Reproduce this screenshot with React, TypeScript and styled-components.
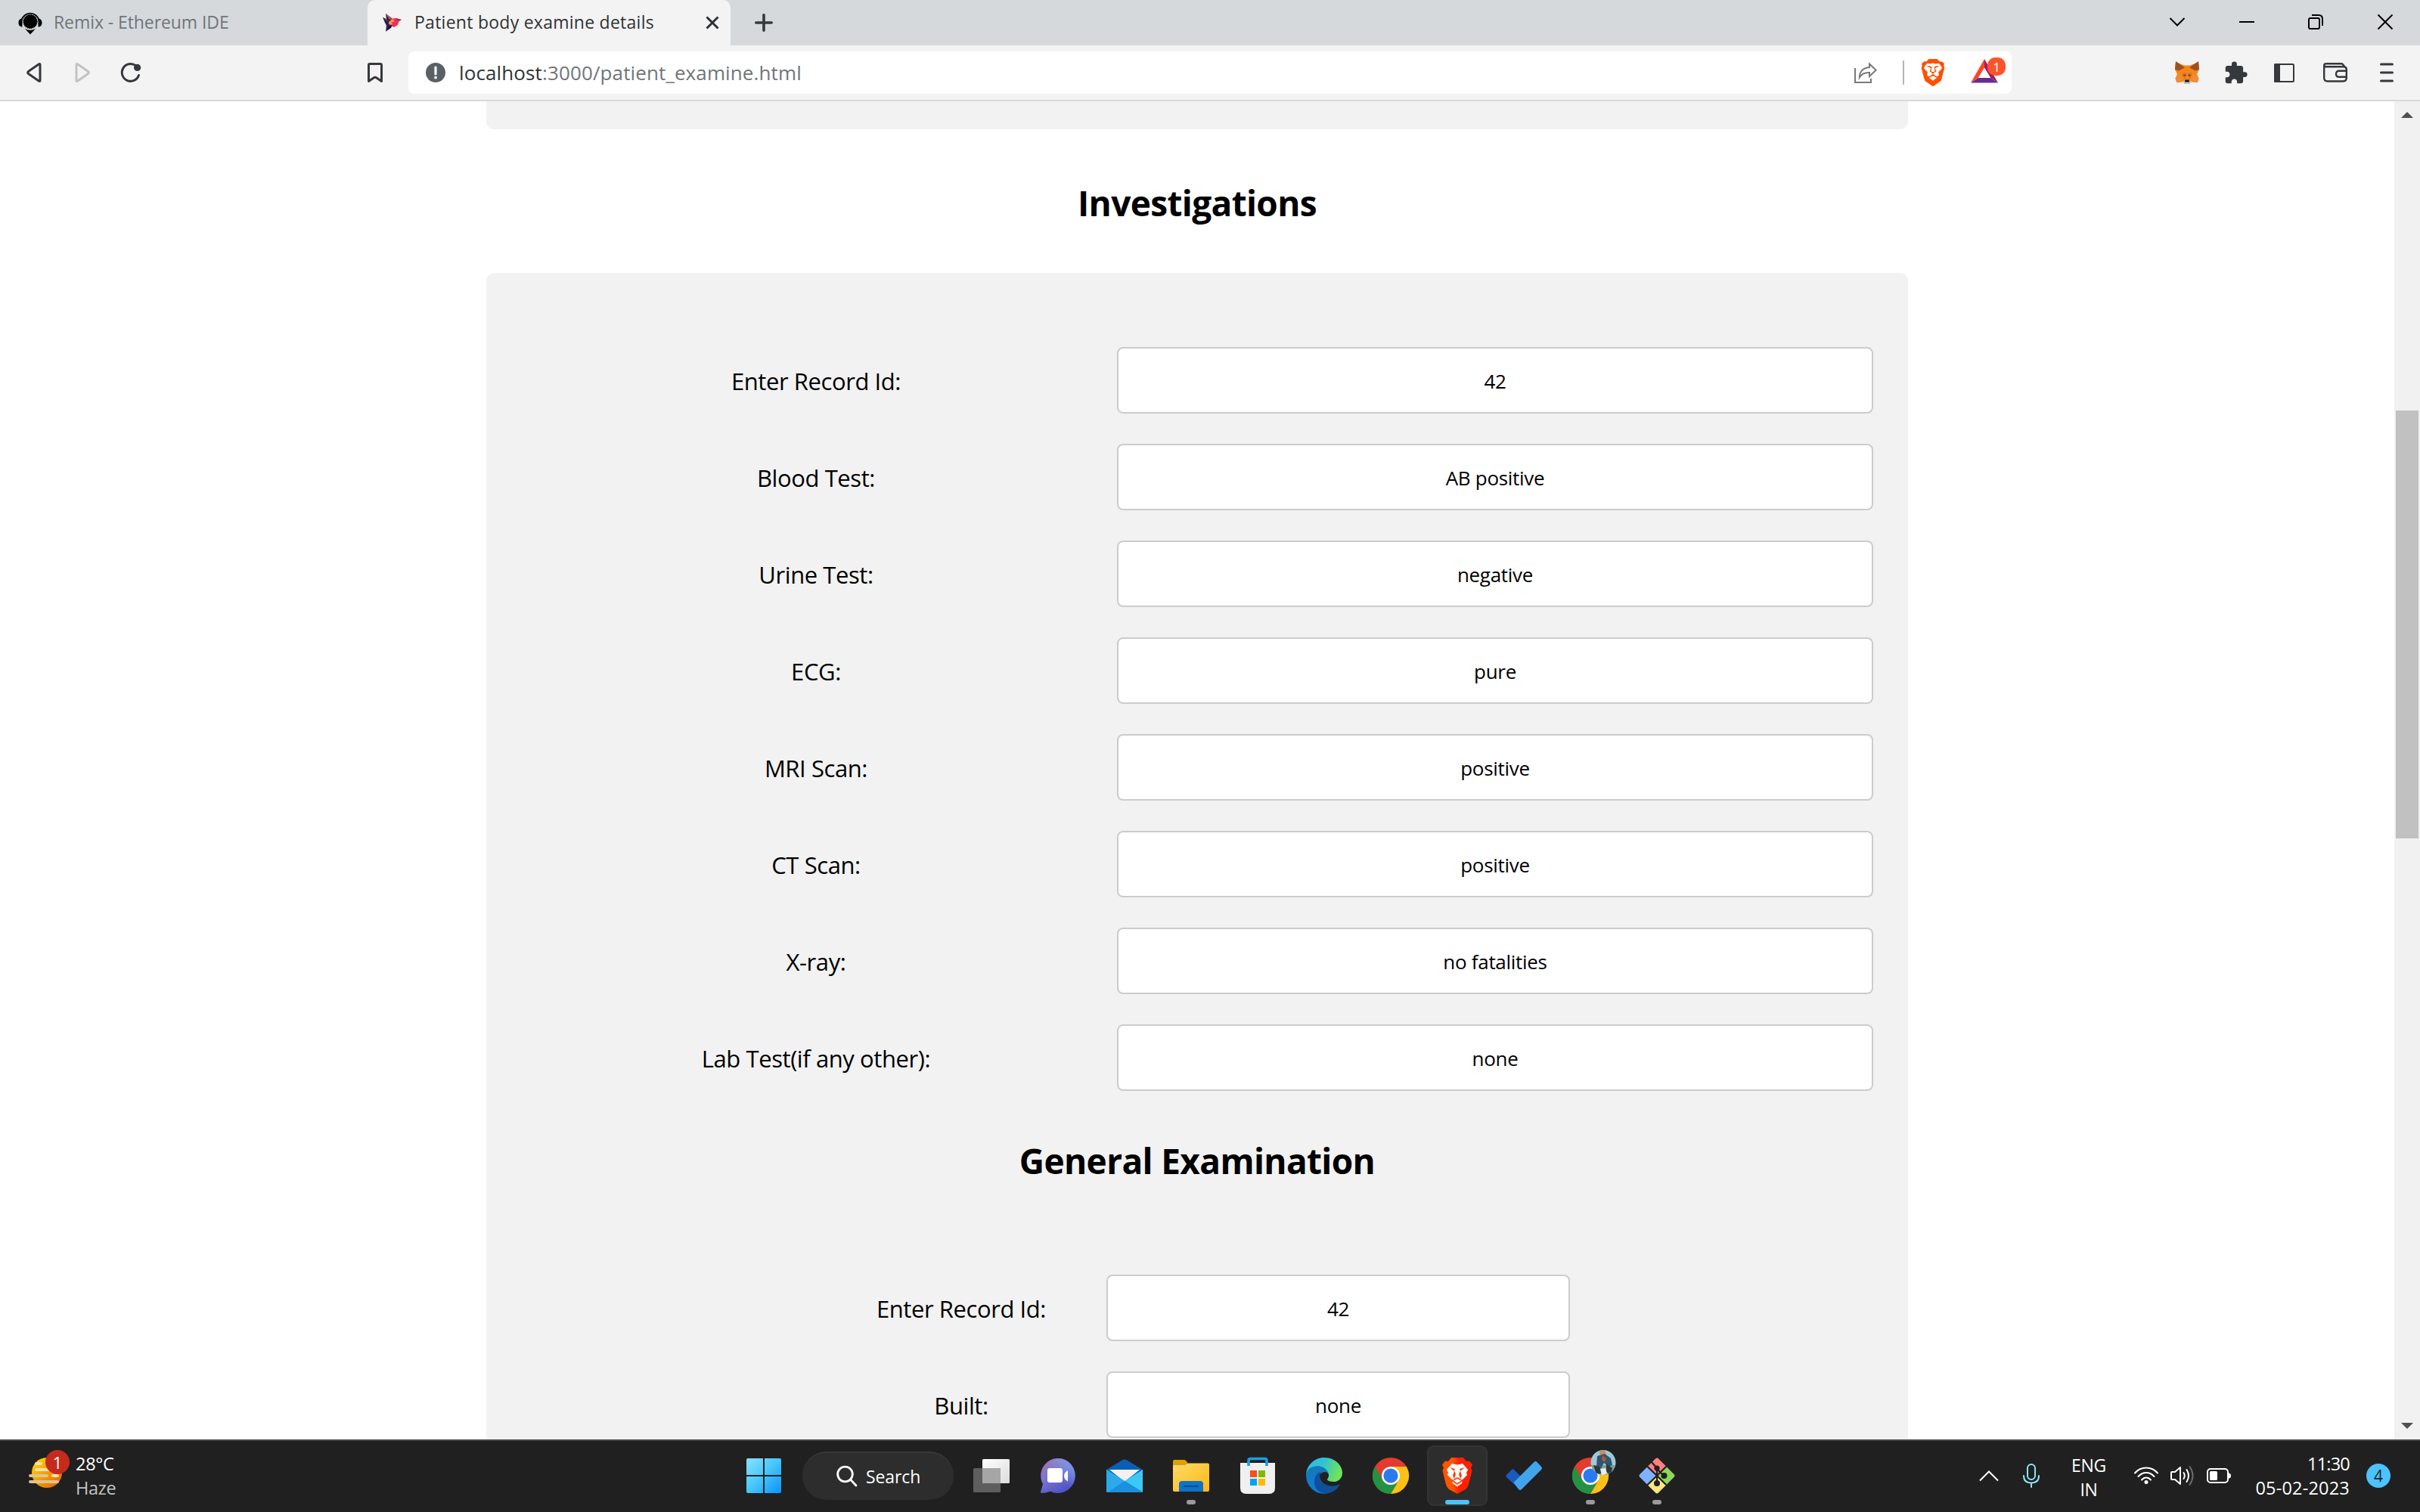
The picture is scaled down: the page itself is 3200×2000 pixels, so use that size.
import React from "react";
import styled, { createGlobalStyle } from "styled-components";
import { SiBrave } from "react-icons/si";
import { MdExtension } from "react-icons/md";

const GlobalStyle = createGlobalStyle`
  * { box-sizing: border-box; }
  body { margin: 0; background: #fff; overflow: hidden; }
  svg { display: block; flex: none; overflow: visible; }
`;

const Screen = styled.div`
  display: flex;
  flex-direction: column;
  width: 3200px;
  height: 2000px;
  font-family: "Open Sans", "Noto Sans", sans-serif;
  overflow: hidden;
`;

/* ---------- Browser chrome ---------- */

const TabStrip = styled.div`
  display: flex;
  height: 60px;
  flex: none;
  background: #d5d9dc;
`;

const Tab = styled.div<{ $active?: boolean }>`
  display: flex;
  align-items: center;
  width: ${(p) => (p.$active ? 480 : 486)}px;
  padding: 0 15px 0 ${(p) => (p.$active ? 20 : 24)}px;
  border-radius: 10px 10px 0 0;
  background: ${(p) => (p.$active ? "#f3f3f3" : "transparent")};
`;

const TabTitle = styled.span<{ $active?: boolean }>`
  flex: 1;
  margin-left: ${(p) => (p.$active ? 17 : 15)}px;
  padding-bottom: 2px;
  font-size: 23px;
  line-height: 32px;
  letter-spacing: ${(p) => (p.$active ? 0.26 : -0.08)}px;
  color: ${(p) => (p.$active ? "#2f3234" : "#70757a")};
  white-space: nowrap;
`;

const IconCell = styled.button<{ $w: number }>`
  display: flex;
  align-items: center;
  justify-content: center;
  width: ${(p) => p.$w}px;
  height: 100%;
  flex: none;
  padding: 0;
  border: 0;
  background: transparent;
  color: #35393d;
`;

const WindowControls = styled.div`
  display: flex;
  width: 367px;
  margin-left: auto;
  padding-bottom: 2px;
`;

const Toolbar = styled.div`
  display: flex;
  align-items: center;
  height: 74px;
  flex: none;
  padding-left: 13px;
  background: #f3f3f3;
  border-bottom: 2px solid #d5d9dc;
`;

const BookmarkCell = styled(IconCell)`
  margin-left: 275px;
  margin-right: 28px;
`;

const AddressBar = styled.div`
  display: flex;
  align-items: center;
  width: 2120px;
  height: 56px;
  padding: 0 8px 0 23px;
  border-radius: 8px;
  background: #fff;
`;

const Url = styled.span`
  flex: 1;
  margin-left: 18px;
  font-size: 26px;
  line-height: 36px;
  letter-spacing: 0.12px;
  color: #70757a;
`;

const UrlHost = styled.span`
  color: #303437;
`;

const BarDivider = styled.span`
  width: 2px;
  height: 32px;
  margin: 0 20px 0 34px;
  background: #b3b6b9;
`;

const RewardsButton = styled.div`
  position: relative;
  width: 46px;
  height: 36px;
  margin-left: 32px;
`;

const RewardsBadge = styled.span`
  position: absolute;
  left: 22px;
  top: -2px;
  width: 24px;
  height: 24px;
  border-radius: 10px;
  background: #fb542b;
  color: #fff;
  font-size: 17px;
  line-height: 25px;
  text-align: center;
`;

const Extensions = styled.div`
  display: flex;
  height: 100%;
  margin-left: auto;
  padding-right: 12px;
`;

/* ---------- Page ---------- */

const Viewport = styled.div`
  display: flex;
  height: 1770px;
  flex: none;
  background: #fff;
  overflow: hidden;
`;

const Page = styled.main`
  display: flex;
  flex: 1;
  flex-direction: column;
  align-items: center;
  color: #000;
`;

const CardEnd = styled.div`
  width: 1880px;
  height: 37px;
  flex: none;
  border-radius: 0 0 10px 10px;
  background: #f2f2f2;
`;

const Heading = styled.h2<{ $h: number; $shift: number }>`
  flex: none;
  height: ${(p) => p.$h}px;
  margin: 0;
  padding-top: ${(p) => p.$shift}px;
  font-size: 46px;
  line-height: ${(p) => p.$h - p.$shift}px;
  letter-spacing: -0.65px;
  font-weight: 700;
  text-align: center;
`;

const Card = styled.section`
  width: 1880px;
  height: 1600px;
  flex: none;
  padding-top: 98px;
  border-radius: 10px 10px 0 0;
  background: #f2f2f2;
`;

const Fields = styled.div<{ $label: number; $input: number; $left: number; $top?: number }>`
  display: grid;
  grid-template-columns: ${(p) => p.$label}px ${(p) => p.$input}px;
  grid-auto-rows: 88px;
  row-gap: 40px;
  margin: ${(p) => p.$top ?? 0}px 0 0 ${(p) => p.$left}px;
`;

const Label = styled.label`
  font-size: 31px;
  line-height: 91px;
  letter-spacing: -0.42px;
  text-align: center;
`;

const Input = styled.input`
  width: 100%;
  height: 88px;
  padding: 2px 0 0;
  border: 2px solid #ccc;
  border-radius: 8px;
  background: #fff;
  font: 26px "Open Sans", "Noto Sans", sans-serif;
  letter-spacing: -0.3px;
  text-align: center;
  color: #000;
`;

const Scrollbar = styled.div`
  display: flex;
  flex-direction: column;
  align-items: center;
  justify-content: space-between;
  width: 34px;
  padding: 14px 0;
  background: #f1f1f1;
`;

const Thumb = styled.div`
  width: 30px;
  height: 566px;
  margin: 387px 0 auto;
  background: #c1c1c1;
`;

/* ---------- Taskbar ---------- */

const Taskbar = styled.footer`
  display: flex;
  align-items: center;
  height: 96px;
  flex: none;
  border-top: 2px solid #454545;
  background: #202020;
  color: #fff;
`;

const Weather = styled.div`
  display: flex;
  align-items: center;
  width: 966px;
  padding: 0 0 2px 36px;
`;

const WeatherIcon = styled.div`
  position: relative;
  width: 64px;
  height: 60px;
`;

const WeatherBadge = styled.span`
  position: absolute;
  left: 24px;
  top: -4px;
  width: 32px;
  height: 32px;
  border-radius: 50%;
  background: #c42b1c;
  font-size: 22px;
  line-height: 32px;
  text-align: center;
`;

const Lines = styled.div<{ $align?: string; $spacing?: number }>`
  display: flex;
  flex-direction: column;
  font-size: 23.5px;
  line-height: 32px;
  letter-spacing: ${(p) => p.$spacing ?? -0.3}px;
  text-align: ${(p) => p.$align ?? "left"};
`;

const Muted = styled.span`
  color: #c4c4c4;
`;

const Apps = styled.div`
  display: flex;
  align-items: center;
  padding-bottom: 2px;
`;

const AppCell = styled.div`
  position: relative;
  display: flex;
  align-items: center;
  justify-content: center;
  width: 88px;
  height: 80px;
`;

const ActiveTile = styled.div`
  display: flex;
  align-items: center;
  justify-content: center;
  width: 80px;
  height: 80px;
  border: 2px solid #343434;
  border-radius: 9px;
  background: #2d2d2d;
`;

const RunMark = styled.span<{ $active?: boolean }>`
  position: absolute;
  left: ${(p) => (p.$active ? 28 : 38)}px;
  top: 72px;
  width: ${(p) => (p.$active ? 32 : 12)}px;
  height: 6px;
  border-radius: 3px;
  background: ${(p) => (p.$active ? "#4cc2ff" : "#9a9a9a")};
`;

const SearchPill = styled.div`
  display: flex;
  align-items: center;
  width: 200px;
  height: 64px;
  margin: 0 6px 0 7px;
  padding-left: 45px;
  border-radius: 32px;
  border-top: 2px solid #383838;
  background: #2d2d2d;
  font-size: 23px;
  letter-spacing: -0.1px;
  line-height: 32px;
`;

const SearchText = styled.span`
  margin-left: 11px;
`;

const Tray = styled.div`
  display: flex;
  align-items: center;
  height: 100%;
  margin-left: auto;
  padding: 0 39px 2px 0;
`;

const Language = styled(Lines)`
  width: 60px;
  margin: 3px 30px 0 19px;
  font-size: 23px;
`;

const StatusIcons = styled.div`
  display: flex;
  align-items: center;
  gap: 16px;
`;

const Clock = styled(Lines)`
  width: 157px;
`;

const Time = styled.span`
  letter-spacing: -0.8px;
`;

const DateText = styled.span`
  letter-spacing: 0.2px;
`;

const Notifications = styled.span`
  width: 32px;
  height: 32px;
  margin-left: 22px;
  border-radius: 50%;
  background: #4cc2ff;
  color: #10222c;
  font-size: 21px;
  line-height: 32px;
  text-align: center;
`;

/* ---------- Drawings ---------- */

const RemixIcon = () => (
  <svg width="32" height="30" viewBox="0 0 32 30">
    <circle cx="16" cy="13.5" r="9" fill="#000" stroke="#000" strokeWidth="1.4" strokeDasharray="1.4 1" />
    <path d="M4.6 12a11.6 11.6 0 0 1 22.8 0" fill="none" stroke="#000" strokeWidth="1.8" />
    <path d="M5.5 9.5v11C2 20.500 .5 18 .5 15s1.500-5.500 5-5.500zM26.500 9.500v11c3.500 0 5-2.500 5-5.500s-1.500-5.500-5-5.500z" />
    <path d="M9 23q7 4 14 0l-7 7.500z" />
  </svg>
);

const BirdIcon = () => (
  <svg width="25" height="26" viewBox="0 0 25 26">
    <path d="M0 6l5 2-1-7 8 6 4 6-6 6-6 6 1-8-2-4z" fill="#2b2350" />
    <path d="M4 1l8 6-3 2zM0 6l6 3 1 2z" fill="#c4573d" />
    <path d="M10 8l7-1 8 2-4 3-1 4-5 3-6-3 3-3z" fill="#ee2f55" />
    <path d="M8 12l5-4 3 3-4 2 1 3-5-1z" fill="#ff8a66" />
    <path d="M17 7l8 2-5 1z" fill="#8c2b3d" />
    <path d="M9 17l4-1-2 4-6 4z" fill="#171539" />
  </svg>
);

const CloseSmall = () => (
  <svg width="18" height="18" viewBox="0 0 18 18" stroke="#2f3234" strokeWidth="3">
    <path d="M1.500 1.500l15 15M16.500 1.500l-15 15" />
  </svg>
);

const PlusIcon = () => (
  <svg width="24" height="24" viewBox="0 0 24 24" stroke="#35393d" strokeWidth="3.600" strokeLinecap="round">
    <path d="M12 1.800v20.400M1.800 12h20.400" />
  </svg>
);

const TriangleIcon = ({ forward }: { forward?: boolean }) => (
  <svg width="20" height="26" viewBox="0 0 20 26" fill="none" stroke={forward ? "#c0c2c4" : "#35393d"} strokeWidth="3" strokeLinejoin="round">
    <path d={forward ? "M2 2.500Q2 1 3.500 1.800L17.500 11.500Q19 13 17.500 14.500L3.500 24.200Q2 25 2 23.500z" : "M18 2.500Q18 1 16.500 1.800L2.500 11.500Q1 13 2.500 14.500L16.500 24.200Q18 25 18 23.500z"} />
  </svg>
);

const ReloadIcon = () => (
  <svg width="28" height="26" viewBox="0 0 28 26">
    <path d="M20.500 3.800A11.400 11.400 0 1 0 24.500 16.500" fill="none" stroke="#35393d" strokeWidth="3" strokeLinecap="round" />
    <circle cx="22.600" cy="6.400" r="4.600" fill="#35393d" />
  </svg>
);

const BookmarkIcon = () => (
  <svg width="20" height="26" viewBox="0 0 20 26" fill="none" stroke="#35393d" strokeWidth="3" strokeLinejoin="round">
    <path d="M1.500 3q0-1.500 1.500-1.500h14q1.500 0 1.500 1.500v21.500L12 20q-2-1.300-4 0l-6.500 4.500z" />
  </svg>
);

const InfoIcon = () => (
  <svg width="26" height="26" viewBox="0 0 26 26">
    <circle cx="13" cy="13" r="13" fill="#5b6064" />
    <path d="M13 6v9" stroke="#fff" strokeWidth="3.200" strokeLinecap="round" />
    <circle cx="13" cy="19.600" r="1.900" fill="#fff" />
  </svg>
);

const ShareIcon = () => (
  <svg width="30" height="28" viewBox="0 0 30 28" fill="none" stroke="#77797b" strokeWidth="2">
    <path d="M1 8v19h21v-5" />
    <path d="M20 2.500l8.600 8.300-8.600 8.200v-5Q11 13.500 6.800 20.500 7 8.500 20 7z" />
  </svg>
);

const BatIcon = () => (
  <svg width="36" height="32" viewBox="0 0 36 32">
    <path d="M18 0v12l-8 13-10 6.500z" fill="#ff4724" />
    <path d="M18 0l18 31.500-10-6.500-8-13z" fill="#9e1f63" />
    <path d="M0 31.500l10-6.500h16l10 6.500z" fill="#662d91" />
    <path d="M18 11.500l8 13.500H10z" fill="#fff" />
  </svg>
);

const FoxIcon = () => (
  <svg width="32" height="30" viewBox="0 0 32 30">
    <path d="M1 1l11 4.500h8L31 1l1 10-3 6 2.500 6-2 5-8-1-2.500 3h-6L10.500 27l-8 1-2-5L3 17l-3-6z" fill="#f6851b" />
    <path d="M1 0l12 8.500-8 4L0 11zM31 0L19 8.500l8 4 5-1.500z" fill="#9a5125" />
    <path d="M3 17l5 1 3 9-8.500 1.500-2-5.500zM29 17l-5 1-3 9 8.500 1.500 2-5.500z" fill="#f08c35" />
    <path d="M9 16l6-1-2 9zM23 16l-6-1 2 9z" fill="#df6f1d" />
    <path d="M10 19l4.500.500v-2zM22 19l-4.500.500v-2z" fill="#2e3548" />
    <path d="M10 27l3-2h6l3 2-3 3h-6z" fill="#cdbdb1" />
    <path d="M13.500 24.500h5l.7 3h-6.400z" fill="#17181d" />
  </svg>
);

const SidebarIcon = () => (
  <svg width="27" height="25" viewBox="0 0 27 25">
    <rect x="1" y="1" width="25" height="23" rx="1.500" fill="none" stroke="#35393d" strokeWidth="2" />
    <rect x="0" y="0" width="8" height="25" rx="1.500" fill="#35393d" />
  </svg>
);

const WalletIcon = () => (
  <svg width="32" height="26" viewBox="0 0 32 26" fill="none" stroke="#35393d" strokeWidth="2.400">
    <path d="M1.200 4v16q0 4.500 4.500 4.500h20.600q4.500 0 4.500-4.500V9q0-3.800-4-3.800H4q-2.800 0-2.800-2T4 1.200h20q2 0 4.500 4.500" />
    <path d="M30.800 10.800H21q-4 0-4 4t4 4h9.800" />
  </svg>
);

const MenuIcon = () => (
  <svg width="18" height="26" viewBox="0 0 18 26" stroke="#35393d" strokeWidth="3" strokeLinecap="round">
    <path d="M1.500 2h15M1.500 13h15M1.500 24h15" />
  </svg>
);

const WindowGlyph = ({ d }: { d: string }) => (
  <svg width="20" height="20" viewBox="0 0 20 20" fill="none" stroke="#000" strokeWidth="2">
    <path d={d} />
  </svg>
);

const ArrowGlyph = ({ down }: { down?: boolean }) => (
  <svg width="16" height="8" viewBox="0 0 16 8" fill="#505050">
    <path d={down ? "M0 0h16L8 8z" : "M0 8h16L8 0z"} />
  </svg>
);

const HazeIcon = () => (
  <svg width="64" height="60" viewBox="0 0 64 60">
    <defs>
      <linearGradient id="sun" x1="0" y1="0" x2="1" y2="1">
        <stop offset="0.100" stopColor="#ffd400" />
        <stop offset="1" stopColor="#e8590a" />
      </linearGradient>
    </defs>
    <circle cx="26" cy="26" r="20" fill="url(#sun)" />
    <g stroke="#f3dfae" strokeWidth="4" strokeLinecap="round">
      <path d="M12 14h6M12 22h18M34 30h6" />
      <path d="M4 30h22M4 38h36" stroke="#dec58f" />
    </g>
  </svg>
);

const StartIcon = () => (
  <svg width="46" height="46" viewBox="0 0 46 46">
    <defs>
      <linearGradient id="start" x1="0" y1="0" x2="46" y2="46" gradientUnits="userSpaceOnUse">
        <stop offset="0" stopColor="#8be0fd" />
        <stop offset="0.450" stopColor="#4cc9fb" />
        <stop offset="1" stopColor="#0a93fa" />
      </linearGradient>
    </defs>
    <path d="M2 0h20v22H0V2q0-2 2-2zM24 0h20q2 0 2 2v20H24zM0 24h22v22H2q-2 0-2-2zM24 24h22v20q0 2-2 2H24z" fill="url(#start)" />
  </svg>
);

const SearchIcon = () => (
  <svg width="28" height="28" viewBox="0 0 28 28" fill="none" stroke="#fff" strokeWidth="2.800" strokeLinecap="round">
    <circle cx="11.500" cy="11" r="9.800" />
    <path d="M18.500 18l7.500 8" />
  </svg>
);

const TaskViewIcon = () => (
  <svg width="48" height="44" viewBox="0 0 48 44">
    <defs>
      <linearGradient id="tv" x1="0" y1="0" x2="1" y2="1">
        <stop offset="0" stopColor="#fff" />
        <stop offset="1" stopColor="#dcdcdc" />
      </linearGradient>
    </defs>
    <rect x="12" y="0" width="36" height="32" rx="1.500" fill="url(#tv)" />
    <rect x="0" y="12" width="36" height="32" rx="1.500" fill="#6a6a6a" fillOpacity="0.850" />
    <path d="M12 12h24v20H12z" fill="#a6a6a6" />
  </svg>
);

const ChatIcon = () => (
  <svg width="46" height="46" viewBox="0 0 46 46">
    <defs>
      <linearGradient id="chat" x1="0.100" y1="0" x2="0.600" y2="1">
        <stop offset="0" stopColor="#a275a8" />
        <stop offset="0.450" stopColor="#7b77d4" />
        <stop offset="1" stopColor="#4f52c6" />
      </linearGradient>
      <linearGradient id="chatEdge" x1="0" y1="1" x2="1" y2="0">
        <stop offset="0.500" stopColor="#7ba7f0" stopOpacity="0" />
        <stop offset="1" stopColor="#7ba7f0" stopOpacity="0.900" />
      </linearGradient>
    </defs>
    <path d="M23 0a23 23 0 1 1-10 43.800Q7 46 1.500 46-.5 46 .3 43.500L3 34A23 23 0 0 1 23 0z" fill="url(#chat)" />
    <path d="M23 0a23 23 0 1 1-10 43.800Q7 46 1.500 46-.5 46 .3 43.500L3 34A23 23 0 0 1 23 0z" fill="url(#chatEdge)" />
    <rect x="9" y="13" width="20" height="19" rx="3" fill="#fff" />
    <path d="M36 16v14.500q-5-3-5-7.200t5-7.300z" fill="#fff" />
  </svg>
);

const MailIcon = () => (
  <svg width="48" height="44" viewBox="0 0 48 44">
    <path d="M0 14L22 .8q2-1.200 4 0L48 14v10H0z" fill="#0a5fb4" />
    <path d="M4 14h40L24 30z" fill="#f2f0f2" />
    <path d="M48 14L24 29l24 15z" fill="#3cc8f5" />
    <path d="M0 14v28q0 2 2 2h46z" fill="#2aaaea" />
    <path d="M0 44l24-15 24 15z" fill="#1b8fe0" />
    <path d="M0 14v28q0 2 2 2l22-15z" fill="#2aaaea" />
  </svg>
);

const FolderIcon = () => (
  <svg width="48" height="42" viewBox="0 0 48 42">
    <defs>
      <linearGradient id="folder" x1="0" y1="0" x2="1" y2="1">
        <stop offset="0" stopColor="#ffda69" />
        <stop offset="1" stopColor="#fdb913" />
      </linearGradient>
    </defs>
    <path d="M0 2q0-2 2-2h13q2 0 3.500 2.500L20 6v6H0z" fill="#dfa000" />
    <path d="M0 7h16l4-2.500h26q2 0 2 2V40q0 2-2 2H2q-2 0-2-2z" fill="url(#folder)" />
    <path d="M8 42V32q0-4 4-4h24q4 0 4 4v10z" fill="#0f72c6" />
    <path d="M15 35h18" stroke="#0b4d8c" strokeWidth="2" strokeLinecap="round" />
  </svg>
);

const StoreIcon = () => (
  <svg width="46" height="48" viewBox="0 0 46 48">
    <path d="M0 7h46v33q0 8-8 8H8q-8 0-8-8z" fill="#f0f0f0" />
    <path d="M11 11V4q0-2.500 2.500-2.500h19Q35 1.500 35 4v7" fill="none" stroke="#1b9fe4" strokeWidth="3.600" />
    <path d="M13 17h9v9h-9z" fill="#f25022" />
    <path d="M24 17h9v9h-9z" fill="#7fba00" />
    <path d="M13 28h9v9h-9z" fill="#00a4ef" />
    <path d="M24 28h9v9h-9z" fill="#ffb900" />
  </svg>
);

const EdgeIcon = () => (
  <svg width="48" height="48" viewBox="0 0 256 256">
    <defs>
      <linearGradient id="edgeA" x1="0" y1="0" x2="1" y2="0.300">
        <stop offset="0" stopColor="#35b5f1" />
        <stop offset="0.500" stopColor="#2fc3d2" />
        <stop offset="1" stopColor="#6fe35a" />
      </linearGradient>
      <linearGradient id="edgeB" x1="0.300" y1="0" x2="0.300" y2="1">
        <stop offset="0" stopColor="#1577b5" />
        <stop offset="1" stopColor="#0a80dc" />
      </linearGradient>
    </defs>
    <path d="M105.730 246.500a79.200 79.200 0 0 1-22.740-21.340 80.720 80.720 0 0 1 34.140-120.150c3.120-1.470 8.450-4.130 15.540-4a32.350 32.350 0 0 1 25.690 13 31.880 31.880 0 0 1 6.360 18.660c0-.210 24.460-79.600-80-79.600-43.900 0-84.720 36-84.720 72.430a130.150 130.150 0 0 0 12.110 56 128 128 0 0 0 156.380 67.110 75.550 75.550 0 0 1-62.760-8z" fill="url(#edgeB)" />
    <path d="M231 190.470a93.730 93.730 0 0 1-10.540 4.710 101.870 101.870 0 0 1-35.900 6.460c-47.320 0-88.540-32.550-88.540-74.320A31.480 31.480 0 0 1 112.450 100c-42.800 1.800-53.800 46.400-53.800 72.530 0 73.880 68.090 81.370 82.760 81.370 7.910 0 19.840-2.300 27-4.560l1.310-.440a128.340 128.340 0 0 0 66.600-52.800 4 4 0 0 0-5.320-5.630z" fill="#10509b" />
    <path d="M152.330 148.860c-.810 1.050-3.300 2.500-3.300 5.660 0 2.610 1.700 5.120 4.720 7.230 14.380 10 41.490 8.680 41.560 8.680a59.560 59.560 0 0 0 30.270-8.350 61.380 61.380 0 0 0 30.430-52.880c.260-22.410-8-37.310-11.340-43.910C223.460 23.840 177.720 0 128 0 58.360 0 1.100 56.100 0 125.500c.480-36.540 36.800-66.050 80-66.050 3.500 0 23.460.340 42 10.070 16.340 8.580 24.900 18.940 30.850 29.210 6.180 10.670 7.280 24.150 7.280 29.520s-2.740 13.330-7.800 20.610z" fill="url(#edgeA)" />
  </svg>
);

const ChromeBase = () => (
  <>
    <circle cx="24" cy="24" r="24" fill="#e33b2e" />
    <path d="M24 12h20.800A24 24 0 0 1 24 48L34.400 30z" fill="#fbc116" />
    <path d="M3.200 12L13.600 30Q17 36 24 36l8.500-2L24 48A24 24 0 0 1 3.200 12z" fill="#229342" />
    <circle cx="24" cy="24" r="12" fill="#fff" />
    <circle cx="24" cy="24" r="9.600" fill="#2a7bf0" />
  </>
);

const ChromeIcon = () => (
  <svg width="48" height="48" viewBox="0 0 48 48">
    <ChromeBase />
  </svg>
);

const ChromeProfileIcon = () => (
  <svg width="48" height="48" viewBox="0 0 48 48">
    <ChromeBase />
    <clipPath id="avatar"><circle cx="41" cy="6.500" r="16.500" /></clipPath>
    <g clipPath="url(#avatar)">
      <path d="M24-11h34v34H24z" fill="#9fc9d8" />
      <path d="M24 10h34v14H24z" fill="#7d9f94" />
      <path d="M36-9l6-2 3 6-5 3-4-2z" fill="#c98b62" />
      <path d="M33-2l10-3 8 6 2 9-5 2-6-5-4 7-6-1z" fill="#2f5670" />
      <path d="M40-3l5 4-2 5-4-3z" fill="#b5543b" />
      <path d="M28 10l8 2 4 8-8 3zM45 8l8 6-2 9-6-4z" fill="#2a3b3f" />
      <path d="M37 15l7-1 2 7-7 3z" fill="#e8eeee" />
    </g>
  </svg>
);

const BraveTaskIcon = () => (
  <svg width="40" height="48" viewBox="0 0 40 48">
    <defs>
      <linearGradient id="brave" x1="0" y1="0" x2="1" y2="0">
        <stop offset="0.350" stopColor="#ff5500" />
        <stop offset="0.550" stopColor="#ff2000" />
      </linearGradient>
    </defs>
    <path d="M12 0h16l4 5 4-.500 4 5-2 4 1.500 4-4.500 18q-1 4-4 6.500L20 48 9 42q-3-2.500-4-6.500L.5 17.500l1.500-4-2-4 4-5 4 .500z" fill="url(#brave)" />
    <path d="M13 8l7 1.500L27 8l7 8-2 4 1 3-7 7q1 2 0 4l-6 4.500L14 34q-1-2 0-4l-7-7 1-3-2-4z" fill="#fff" />
    <path d="M10 13l7 2-1 2 2 5-2 6q4-2 4-2t4 2l-2-6 2-5-1-2 7-2-6 5 2 6-2 4 3 3-7-2-7 2 3-3-2-4 2-6z" fill="#ff3a08" />
    <path d="M18 14h4l-1 12h-2z" fill="#fff" />
    <path d="M14 31l6-3 6 3-6 4z" fill="#fff" />
    <path d="M13 30l7 5 7-5" fill="none" stroke="#ff3a08" strokeWidth="1.600" />
  </svg>
);

const TodoIcon = () => (
  <svg width="48" height="38" viewBox="0 0 48 38">
    <path d="M1 18l7-7q1.500-1.500 3 0l12 12-9 10L1 21q-1.500-1.500 0-3z" fill="#185abd" />
    <path d="M10.500 28L37.500 1q2-2 4 0l5.500 6q2 2 0 4L21 37q-2 2-4 0z" fill="#41a5ee" />
  </svg>
);

const GitIcon = () => (
  <svg width="48" height="48" viewBox="0 0 48 48">
    <path d="M22 1.500q2-2 4 0L36 11.500 24 23.500 12 11.500z" fill="#ff8080" />
    <path d="M37 12.500L46.500 22q2 2 0 4L37 35.500 25 24z" fill="#8fd65c" />
    <path d="M11 12.500L23 24 11 35.500 1.500 26q-2-2 0-4z" fill="#80b3ff" />
    <path d="M24 24.500l12 12-10 10q-2 2-4 0l-10-10z" fill="#ffe680" />
    <path d="M16 5l8 9v18M24 15l9 9M11.500 12L24 24l12-12M11.500 36L24 24l12 12" fill="none" stroke="#202020" strokeWidth="2.200" />
    <circle cx="24" cy="14" r="3.600" fill="#202020" />
    <circle cx="33.500" cy="24" r="4" fill="#202020" />
    <circle cx="24" cy="34" r="4" fill="#202020" />
  </svg>
);

const ChevronUp = () => (
  <svg width="26" height="14" viewBox="0 0 26 14" fill="none" stroke="#fff" strokeWidth="2">
    <path d="M1 13.500L13 1.500l12 12" />
  </svg>
);

const MicIcon = () => (
  <svg width="22" height="32" viewBox="0 0 22 32" fill="none" stroke="#8fe4f8" strokeWidth="2" strokeLinecap="round">
    <rect x="6" y="1" width="10" height="20" rx="5" />
    <path d="M1 16q0 9.500 10 9.500T21 16M11 26v5" />
  </svg>
);

const WifiIcon = () => (
  <svg width="32" height="24" viewBox="0 0 32 24" fill="none" stroke="#fff" strokeWidth="2" strokeLinecap="round">
    <path d="M1 8.500Q7 1.500 16 1.500t15 7M5.500 13Q10 8 16 8t10.500 5M10 17.500q2.500-3 6-3t6 3" />
    <circle cx="16" cy="20.500" r="2.500" fill="#fff" stroke="none" />
  </svg>
);

const VolumeIcon = () => (
  <svg width="32" height="28" viewBox="0 0 32 28" fill="none" stroke="#fff" strokeWidth="2" strokeLinejoin="round" strokeLinecap="round">
    <path d="M1 10q0-1 1-1h4l7-6v22l-7-6H2q-1 0-1-1z" />
    <path d="M17.500 10q2.500 4 0 8M21.500 6q5 8 0 16" />
    <path d="M25.500 2q8 12 0 24" stroke="#6a6a6a" />
  </svg>
);

const BatteryIcon = () => (
  <svg width="32" height="20" viewBox="0 0 32 20">
    <rect x="1" y="1" width="27" height="18" rx="4" fill="none" stroke="#fff" strokeWidth="2" />
    <rect x="4" y="4" width="10" height="12" rx="1.500" fill="#fff" />
    <path d="M29 6.500q3 0 3 3.500t-3 3.500z" fill="#fff" />
  </svg>
);

/* ---------- Data ---------- */

const investigations = [
  ["Enter Record Id:", "42"],
  ["Blood Test:", "AB positive"],
  ["Urine Test:", "negative"],
  ["ECG:", "pure"],
  ["MRI Scan:", "positive"],
  ["CT Scan:", "positive"],
  ["X-ray:", "no fatalities"],
  ["Lab Test(if any other):", "none"],
];

const examination = [
  ["Enter Record Id:", "42"],
  ["Built:", "none"],
];

const apps = [
  { name: "task-view", icon: <TaskViewIcon /> },
  { name: "chat", icon: <ChatIcon /> },
  { name: "mail", icon: <MailIcon /> },
  { name: "files", icon: <FolderIcon />, running: true },
  { name: "store", icon: <StoreIcon /> },
  { name: "edge", icon: <EdgeIcon /> },
  { name: "chrome", icon: <ChromeIcon /> },
  { name: "brave", icon: <BraveTaskIcon />, active: true },
  { name: "todo", icon: <TodoIcon /> },
  { name: "chrome-profile", icon: <ChromeProfileIcon />, running: true },
  { name: "git", icon: <GitIcon />, running: true },
];

const Rows = ({ rows }: { rows: string[][] }) => (
  <>
    {rows.map(([label, value]) => (
      <React.Fragment key={label}>
        <Label>{label}</Label>
        <Input defaultValue={value} />
      </React.Fragment>
    ))}
  </>
);

export default function App() {
  return (
    <Screen>
      <GlobalStyle />
      <TabStrip>
        <Tab>
          <RemixIcon />
          <TabTitle>Remix - Ethereum IDE</TabTitle>
        </Tab>
        <Tab $active>
          <BirdIcon />
          <TabTitle $active>Patient body examine details</TabTitle>
          <CloseSmall />
        </Tab>
        <IconCell $w={88}><PlusIcon /></IconCell>
        <WindowControls>
          <IconCell $w={91.75}><WindowGlyph d="M0.500 5l9.500 9.500L19.500 5" /></IconCell>
          <IconCell $w={91.75}><WindowGlyph d="M0 10h20" /></IconCell>
          <IconCell $w={91.75}>
            <WindowGlyph d="M3 5h10q2 0 2 2v10q0 2-2 2H3q-2 0-2-2V7q0-2 2-2zM5 1h9q5 0 5 5v9" />
          </IconCell>
          <IconCell $w={91.75}><WindowGlyph d="M0.500 0.500l19 19M19.500 0.500l-19 19" /></IconCell>
        </WindowControls>
      </TabStrip>

      <Toolbar>
        <IconCell $w={64}><TriangleIcon /></IconCell>
        <IconCell $w={64}><TriangleIcon forward /></IconCell>
        <IconCell $w={64}><ReloadIcon /></IconCell>
        <BookmarkCell $w={32}><BookmarkIcon /></BookmarkCell>
        <AddressBar>
          <InfoIcon />
          <Url><UrlHost>localhost</UrlHost>:3000/patient_examine.html</Url>
          <ShareIcon />
          <BarDivider />
          <SiBrave size={36} color="#ff5000" />
          <RewardsButton>
            <BatIcon />
            <RewardsBadge>1</RewardsBadge>
          </RewardsButton>
        </AddressBar>
        <Extensions>
          <IconCell $w={64}><FoxIcon /></IconCell>
          <IconCell $w={64}><MdExtension size={33} /></IconCell>
          <IconCell $w={64}><SidebarIcon /></IconCell>
          <IconCell $w={72}><WalletIcon /></IconCell>
          <IconCell $w={64}><MenuIcon /></IconCell>
        </Extensions>
      </Toolbar>

      <Viewport>
        <Page>
          <CardEnd />
          <Heading $h={190} $shift={4}>Investigations</Heading>
          <Card>
            <Fields $label={796} $input={1000} $left={38}>
              <Rows rows={investigations} />
            </Fields>
            <Heading $h={184} $shift={0}>General Examination</Heading>
            <Fields $label={384} $input={613} $left={436} $top={59}>
              <Rows rows={examination} />
            </Fields>
          </Card>
        </Page>
        <Scrollbar>
          <ArrowGlyph />
          <Thumb />
          <ArrowGlyph down />
        </Scrollbar>
      </Viewport>

      <Taskbar>
        <Weather>
          <WeatherIcon>
            <HazeIcon />
            <WeatherBadge>1</WeatherBadge>
          </WeatherIcon>
          <Lines>
            <span>28°C</span>
            <Muted>Haze</Muted>
          </Lines>
        </Weather>
        <Apps>
          <AppCell><StartIcon /></AppCell>
          <SearchPill>
            <SearchIcon />
            <SearchText>Search</SearchText>
          </SearchPill>
          {apps.map((app) => (
            <AppCell key={app.name}>
              {app.active ? <ActiveTile>{app.icon}</ActiveTile> : app.icon}
              {(app.running || app.active) && <RunMark $active={app.active} />}
            </AppCell>
          ))}
        </Apps>
        <Tray>
          <IconCell $w={58}><ChevronUp /></IconCell>
          <IconCell $w={54}><MicIcon /></IconCell>
          <Language $align="center">
            <span>ENG</span>
            <span>IN</span>
          </Language>
          <StatusIcons>
            <WifiIcon />
            <VolumeIcon />
            <BatteryIcon />
          </StatusIcons>
          <Clock $align="right">
            <Time>11:30</Time>
            <DateText>05-02-2023</DateText>
          </Clock>
          <Notifications>4</Notifications>
        </Tray>
      </Taskbar>
    </Screen>
  );
}
